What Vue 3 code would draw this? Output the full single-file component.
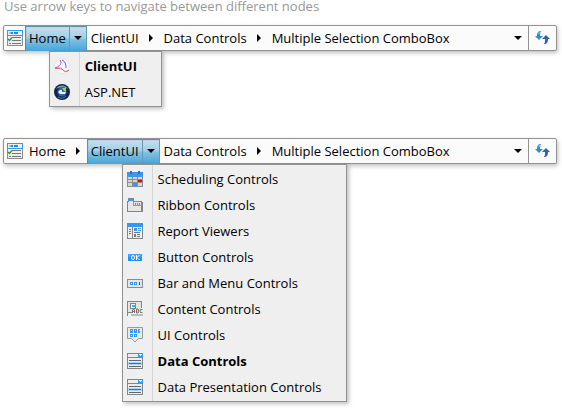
<template>
  <main class="page">
    <p class="hint">Use arrow keys to navigate between different nodes</p>

    <nav v-for="bar in bars" :key="bar.id" class="bar" :aria-label="bar.label">
      <span class="root-icon">
        <svg width="16" height="16" viewBox="0 0 16 16" shape-rendering="crispEdges">
          <path fill="#8c8c8c" d="M0 5h16v11H0z" />
          <path fill="#eee" d="M1 6h14v9H1z" />
          <path fill="#3399f5" d="M0 0h16v6H0z" />
          <path fill="#eee" d="M1 1h14v4H1z" />
          <path fill="#8fc4f5" d="M2 2h4v2H2z" />
          <path fill="#2684e5" d="M4 2h2v2H4zM7 2h4v2H7z" />
          <path fill="#777" d="M5 7h9v1H5zM5 10h9v1H5zM2 13h2v1H2zM5 13h9v1H5z" />
          <path fill="none" stroke="#129b35" stroke-width="1.2" d="M1 9l1.500 1.500L5 7.500" shape-rendering="auto" />
        </svg>
      </span>

      <div v-for="(node, i) in path" :key="node" class="node" :class="{ open: bar.open === i }">
        <button type="button" class="node-label">{{ node }}</button>
        <div v-if="i < path.length - 1" class="node-more">
          <button
            type="button"
            class="node-arrow"
            :aria-label="'Show children of ' + node"
            :aria-expanded="bar.open === i"
            @click="toggle(bar, i)"
          >
            <svg v-if="bar.open === i" width="8" height="4" viewBox="0 0 8 4"><path d="M0 0h8L4 4z" /></svg>
            <svg v-else width="4" height="8" viewBox="0 0 4 8"><path d="M0 0l4 4-4 4z" /></svg>
          </button>
          <ul v-if="bar.open === i && menus[i]" class="menu">
            <li v-for="item in menus[i]" :key="item.text">
              <button type="button" class="menu-item" :class="{ current: item.text === path[i + 1] }">
                <span class="menu-icon">
                  <svg width="16" height="16" viewBox="0 0 16 16" v-html="icons[item.icon]"></svg>
                </span>
                <span class="menu-text">{{ item.text }}</span>
              </button>
            </li>
          </ul>
        </div>
      </div>

      <button type="button" class="history" aria-label="History">
        <svg width="8" height="4" viewBox="0 0 8 4"><path d="M0 0h8L4 4z" /></svg>
      </button>
      <button type="button" class="refresh" aria-label="Refresh">
        <svg width="16" height="14" viewBox="0 0 16 14">
          <path fill="#3b86d0" d="M6 0C3 0 2 2 2 5H0l4 4 4-4H5c0-2 0-3 1-5z" />
          <path fill="#2a66b5" d="M7 8l4-4 4 4h-2c0 3-1 5-4 5 1-1 1-3 1-5z" />
          <path fill="#48bfe6" d="M6 0C4 0 3 1 3 3h2c0-1 0-2 1-3z" />
        </svg>
      </button>
    </nav>
  </main>
</template>

<script setup>
import { reactive } from 'vue'

const path = ['Home', 'ClientUI', 'Data Controls', 'Multiple Selection ComboBox']

const bars = reactive([
  { id: 'first', label: 'Breadcrumb with Home expanded', open: 0 },
  { id: 'second', label: 'Breadcrumb with ClientUI expanded', open: 1 }
])

const menus = [
  [
    { text: 'ClientUI', icon: 'clientui' },
    { text: 'ASP.NET', icon: 'aspnet' }
  ],
  [
    { text: 'Scheduling Controls', icon: 'calendar' },
    { text: 'Ribbon Controls', icon: 'ribbon' },
    { text: 'Report Viewers', icon: 'report' },
    { text: 'Button Controls', icon: 'button' },
    { text: 'Bar and Menu Controls', icon: 'toolbar' },
    { text: 'Content Controls', icon: 'content' },
    { text: 'UI Controls', icon: 'ui' },
    { text: 'Data Controls', icon: 'data' },
    { text: 'Data Presentation Controls', icon: 'data' }
  ]
]

const icons = {
  clientui: `
    <circle cx="8" cy="8" r="7.5" fill="#f8f8fa" stroke="#dedee2" stroke-width=".6"/>
    <path d="M6 2c2 3 1 6-5 8" fill="none" stroke="#b34bd6"/>
    <path d="M8 2c3 1 4 4 4 8" fill="none" stroke="#5566e0"/>
    <path d="M1 10c3 1 5-1 7 1 2 3 5 3 7 1" fill="none" stroke="#e23a55"/>`,
  aspnet: `
    <circle cx="8" cy="8" r="8" fill="#14264c"/>
    <path d="M2 5a7 7 0 0 1 12 0c-3-2-9-2-12 0z" fill="#8797b5"/>
    <circle cx="8" cy="8" r="4.5" fill="#2c65a8"/>
    <path d="M4 8l2-2h2v2h4l-1 2H6z" fill="#e9f5ff"/>
    <path d="M8 4h4v4l-2-1z" fill="#9bd05a"/>
    <path d="M4 13c3 2 6 1 8-1" fill="none" stroke="#4484c5"/>`,
  calendar: `
    <g shape-rendering="crispEdges">
    <path fill="#8c8c8c" d="M0 5h16v11H0z"/>
    <path fill="#3399f5" d="M0 1h16v5H0z"/>
    <path fill="#666" d="M3 0h2v3H3zM11 0h2v3h-2z"/>
    <path fill="#d6d6d6" d="M1 6h4v2H1zM6 6h4v2H6zM11 6h4v2h-4zM1 9h4v2H1zM6 9h4v2H6zM1 12h4v3H1zM11 12h4v3h-4z"/>
    <path fill="#f00000" d="M11 9h4v2h-4z"/>
    <path fill="#3399f5" d="M6 12h4v3H6z"/></g>`,
  ribbon: `
    <g shape-rendering="crispEdges">
    <path fill="#858585" d="M1 1h6v3h8v1h1v10H0V4h1z"/>
    <path fill="#e6e6e6" d="M2 2h4v3h8v9H1V5h1z"/>
    <path fill="#3399f5" d="M1 2h5v2H1zM8 6h1v2H8zM10 6h1v2h-1zM12 6h1v2h-1z"/>
    <path fill="#9a9a9a" d="M6 5h1v4H6zM7 8h8v1H7z"/></g>`,
  report: `
    <g shape-rendering="crispEdges">
    <path fill="#858585" d="M0 0h16v16H0z"/>
    <path fill="#ededed" d="M1 4h4v11H1zM6 4h9v11H6z"/>
    <path fill="#3399f5" d="M0 0h16v4H0zM7 5h3v3H7zM11 5h3v1h-3zM11 7h3v1h-3z"/>
    <path fill="#777" d="M2 6h2v1H2zM2 8h2v1H2zM2 10h2v1H2zM7 9h6v1H7zM7 11h2v3H7zM10 11h3v1h-3zM10 13h3v1h-3z"/></g>`,
  button: `
    <path fill="#2593f4" d="M1 5h14v7H1z" shape-rendering="crispEdges"/>
    <path fill="#68b7fb" d="M1 5h14v3H1z" opacity=".4"/>
    <ellipse cx="6" cy="8.5" rx="1.5" ry="2" fill="none" stroke="#fff"/>
    <path d="M9.500 6v5M12.500 6l-2.500 2.500 2.500 2.500" fill="none" stroke="#fff"/>`,
  toolbar: `
    <g shape-rendering="crispEdges">
    <path fill="#8c8c8c" d="M0 4h16v9H0z"/>
    <path fill="#e4e4e4" d="M1 5h14v7H1z"/>
    <path fill="#3399f5" d="M3 7h3v3H3zM7 7h3v3H7z"/>
    <path fill="#f2f2f2" d="M4 8h1v1H4zM8 8h1v1H8z"/>
    <path fill="#555" d="M12 7h1v3h-1z"/></g>`,
  content: `
    <g shape-rendering="crispEdges">
    <path fill="#858585" d="M0 0h15v1H0zM0 1h1v14H0zM14 1h1v6h-1zM1 11h4v1H1z"/>
    <path fill="#e4e4e4" d="M1 1h13v10H1z"/>
    <path fill="#858585" d="M3 2h6v6H3z"/>
    <path fill="#fff" d="M4 3h4v4H4z"/>
    <path fill="#27bff2" d="M5 4h3v2H5z"/>
    <path fill="#bcbcbc" d="M4 13h12v2H4z"/></g>
    <path d="M5.500 12V9l1-1 1 1v3M5.500 10.500h2M9.500 8v4h1.500l.5-1-.5-1 .5-1-.5-1zM15.500 8.500h-2l-.5 1.500.5 1.500h2" fill="none" stroke="#555" stroke-width=".8"/>`,
  ui: `
    <path fill="#e9e9e9" stroke="#999" d="M.5.500h15v11h-4L8 15l-3.500-3.500h-4z"/>
    <g fill="#3399f5" shape-rendering="crispEdges">
    <path d="M3 2h3v4H3zM7 2h3v4H7zM11 2h2v4h-2zM3 7h3v3H3zM7 7h3v3H7z"/>
    <path fill="#b8dcfa" d="M4 3h1v1H4zM8 3h1v1H8zM12 3h1v1h-1zM4 8h1v1H4zM8 8h1v1H8z"/></g>`,
  data: `
    <g shape-rendering="crispEdges">
    <path fill="#858585" d="M0 5h16v11H0z"/>
    <path fill="#ededed" d="M1 5h14v10H1z"/>
    <path fill="#3399f5" d="M0 0h16v5H0z"/>
    <path fill="#ededed" d="M1 1h10v3H1z"/>
    <path fill="#fff" d="M12 1h3v1h-3zM13 2h1v1h-1z"/>
    <path fill="#666" d="M2 7h12v1H2zM2 13h12v1H2z"/>
    <path fill="#a9d2f8" d="M1 9h14v3H1z"/>
    <path fill="#2f78bd" d="M2 10h12v1H2z"/></g>`
}

function toggle(bar, index) {
  bar.open = bar.open === index ? -1 : index
}
</script>

<style>
body {
  background: #fff;
}
</style>

<style scoped>
.page {
  box-sizing: border-box;
  min-height: 100vh;
  padding: 0 5px 6px 3px;
  font-family: "Open Sans", "Segoe UI", sans-serif;
  font-size: 13px;
  line-height: 16px;
  color: #000;
}

.hint {
  margin: 0 0 12px;
  padding-left: 1px;
  line-height: 13px;
  color: #999;
}

button {
  margin: 0;
  padding: 0;
  border: 0;
  background: none;
  font: inherit;
  color: inherit;
}

svg {
  display: block;
}

.bar {
  box-sizing: border-box;
  display: flex;
  height: 26px;
  border: 1px solid #929292;
  border-radius: 2px;
  background: #fbfbfb;
  box-shadow: 1px 2px 4px rgba(0, 0, 0, 0.25);
}

.bar + .bar {
  margin-top: 87px;
}

.root-icon {
  flex: none;
  display: flex;
  align-items: center;
  padding: 0 2px 0 3px;
}

.node {
  display: flex;
  white-space: nowrap;
}

.node-label {
  padding: 0 3px 0 4px;
}

.node-more {
  display: flex;
  position: relative;
}

.node-arrow {
  box-sizing: border-box;
  width: 18px;
  display: flex;
  align-items: center;
  justify-content: center;
}

/* the highlight runs over the bottom border of the bar */
.open {
  margin-bottom: -1px;
  background: linear-gradient(#c5e2f1, #a0cfe7 48%, #83c1e2 52%, #48a5da);
  box-shadow: inset 1px 1px 1px #58899f;
}

.open .node-label,
.open .node-arrow {
  padding-bottom: 1px;
}

.open .node-arrow {
  border-left: 1px solid #5f9cb9;
  border-right: 1px solid #5f9cb9;
}

.history {
  margin-left: auto;
  width: 20px;
  display: flex;
  align-items: center;
  justify-content: center;
}

.refresh {
  flex: none;
  width: 28px;
  display: flex;
  align-items: center;
  justify-content: center;
  border-left: 1px solid #929292;
}

.menu {
  position: absolute;
  z-index: 1;
  top: 100%;
  left: -20px;
  margin: 0;
  padding: 1px 24px 1px 0;
  list-style: none;
  border: 1px solid #929292;
  background: linear-gradient(90deg, #efefef 29px, #d5d5d5 29px, #d5d5d5 30px, #efefef 30px);
  box-shadow: 2px 2px 4px rgba(0, 0, 0, 0.25);
}

.menu-item {
  display: flex;
  align-items: center;
  height: 26px;
  text-align: left;
}

.menu-icon {
  flex: none;
  width: 31px;
  padding-left: 4px;
}

.current .menu-text {
  font-weight: bold;
}
</style>
